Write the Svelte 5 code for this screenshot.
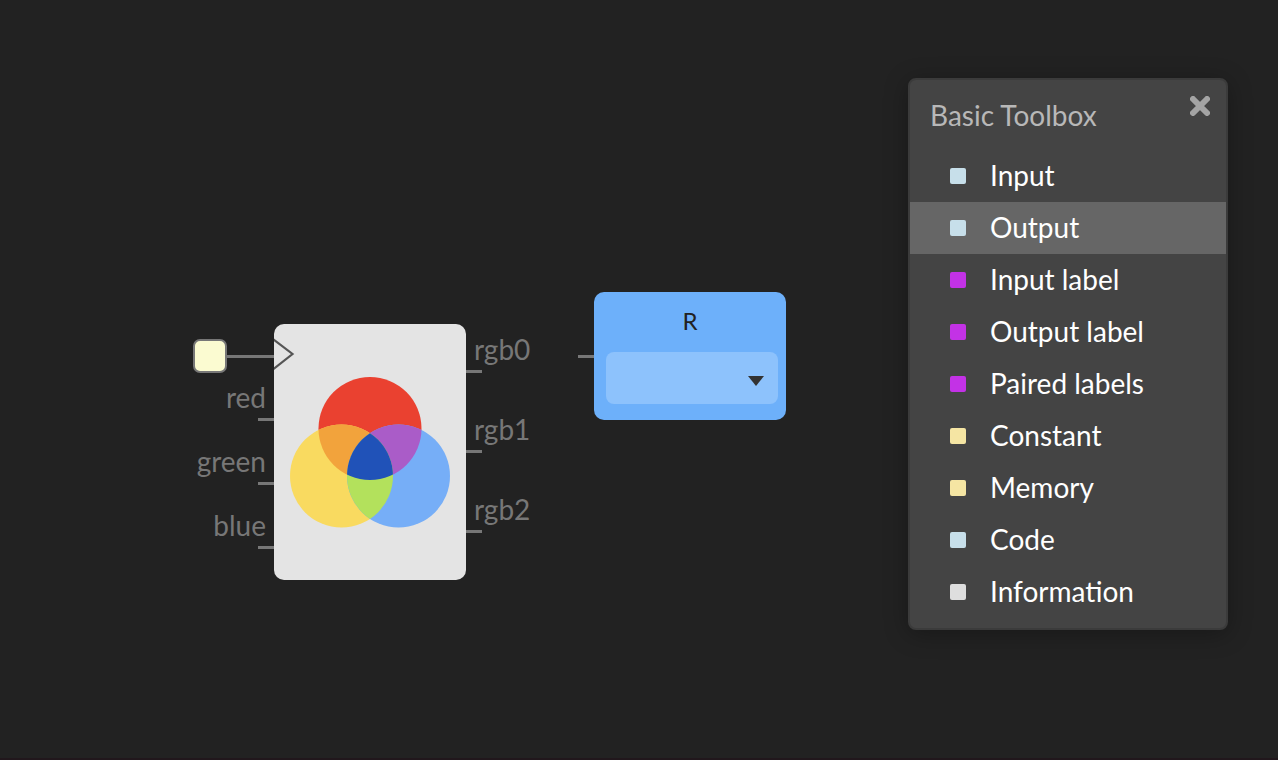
<script>
  const inputs = ['red', 'green', 'blue'];
  const outputs = ['rgb0', 'rgb1', 'rgb2'];
  const items = [
    { name: 'Input', color: '#c7dfea' },
    { name: 'Output', color: '#c7dfea' },
    { name: 'Input label', color: '#c332e6' },
    { name: 'Output label', color: '#c332e6' },
    { name: 'Paired labels', color: '#c332e6' },
    { name: 'Constant', color: '#f5e5a3' },
    { name: 'Memory', color: '#f5e5a3' },
    { name: 'Code', color: '#c7dfea' },
    { name: 'Information', color: '#dedede' }
  ];
  let active = $state('Output');
  let open = $state(true);
  let pin = $state('');
</script>

<main class="canvas">
  <section class="node mixer">
    <div class="ports left">
      <div class="clock"><span class="square"></span><span class="wire"></span></div>
      {#each inputs as name}
        <div class="port">{name}</div>
      {/each}
    </div>
    <div class="body">
      <svg class="edge" width="22" height="34" viewBox="0 0 22 34">
        <path d="M-1 1 L18.500 16 L-1 31.500" fill="none" stroke="#555" stroke-width="2.200" />
      </svg>
      <svg class="venn" width="160" height="152" viewBox="0 0 160 152">
        <defs>
          <clipPath id="red-area"><circle cx="80" cy="52.500" r="51.500" /></clipPath>
          <clipPath id="yellow-area"><circle cx="51.500" cy="100" r="51.500" /></clipPath>
        </defs>
        <circle cx="80" cy="52.500" r="51.500" fill="#ea4130" />
        <circle cx="51.500" cy="100" r="51.500" fill="#f9da60" />
        <circle cx="108.500" cy="100" r="51.500" fill="#76aef7" />
        <circle cx="51.500" cy="100" r="51.500" fill="#f2a33c" clip-path="url(#red-area)" />
        <circle cx="108.500" cy="100" r="51.500" fill="#aa5cc8" clip-path="url(#red-area)" />
        <circle cx="108.500" cy="100" r="51.500" fill="#b3e15c" clip-path="url(#yellow-area)" />
        <g clip-path="url(#yellow-area)">
          <circle cx="108.500" cy="100" r="51.500" fill="#2052b8" clip-path="url(#red-area)" />
        </g>
      </svg>
    </div>
    <div class="ports right">
      {#each outputs as name}
        <div class="port">{name}</div>
      {/each}
    </div>
  </section>

  <section class="node output">
    <span class="stub"></span>
    <div class="card">
      <label for="pin">R</label>
      <div class="picker">
        <select id="pin" bind:value={pin}>
          <option value=""></option>
        </select>
        <svg width="16" height="10" viewBox="0 0 16 10"><path d="M0 0H16L8 10Z" fill="#333" /></svg>
      </div>
    </div>
  </section>

  {#if open}
    <aside class="toolbox">
      <header>
        <h2>Basic Toolbox</h2>
        <button class="close" aria-label="Close" onclick={() => (open = false)}>
          <svg width="20" height="20" viewBox="0 0 20 20"><path d="M3 3L17 17M17 3L3 17" stroke="#a4a4a4" stroke-width="6" stroke-linecap="round" /></svg>
        </button>
      </header>
      <ul>
        {#each items as item}
          <li>
            <button class="item" class:active={active === item.name} onclick={() => (active = item.name)}>
              <span class="swatch" style:background={item.color}></span>
              <span class="name">{item.name}</span>
            </button>
          </li>
        {/each}
      </ul>
    </aside>
  {/if}
</main>

<style>
  :global(body) {
    margin: 0;
    background: #222;
  }
  .canvas {
    position: relative;
    box-sizing: border-box;
    min-height: 100vh;
    overflow: hidden;
    background: #222;
    border-bottom: 2px solid #21171c;
    font-family: Lato, sans-serif;
    font-size: 28px;
    line-height: 32px;
  }
  .node {
    position: absolute;
    display: flex;
  }
  .mixer {
    left: 193px;
    top: 324px;
  }
  .body {
    position: relative;
    display: flex;
    align-items: center;
    justify-content: center;
    width: 192px;
    height: 256px;
    border-radius: 10px;
    background: #e4e4e4;
  }
  .edge {
    position: absolute;
    left: 0;
    top: 14px;
  }
  .ports {
    display: flex;
    flex-direction: column;
    color: #777;
  }
  .left {
    gap: 32px;
    width: 81px;
    text-align: right;
  }
  .clock {
    display: flex;
    align-items: center;
    height: 64px;
    margin-bottom: -39px;
  }
  .square {
    box-sizing: border-box;
    width: 34px;
    height: 34px;
    border: 2px solid #777;
    border-radius: 7px;
    background: #fbfbd1;
  }
  .wire {
    flex: 1;
    height: 3px;
    background: #777;
  }
  .port {
    position: relative;
  }
  .port::after {
    content: '';
    position: absolute;
    bottom: -8px;
    width: 16px;
    height: 3px;
    background: #777;
  }
  .left .port {
    padding-right: 8px;
  }
  .left .port::after {
    right: 0;
  }
  .right {
    gap: 48px;
    padding-top: 9px;
  }
  .right .port {
    padding-left: 8px;
  }
  .right .port::after {
    left: 0;
  }
  .output {
    left: 578px;
    top: 292px;
    align-items: center;
  }
  .stub {
    width: 16px;
    height: 3px;
    background: #777;
  }
  .card {
    box-sizing: border-box;
    display: flex;
    flex-direction: column;
    width: 192px;
    height: 128px;
    padding: 12px 8px 16px 12px;
    border-radius: 10px;
    background: #6db0fa;
  }
  .card label {
    flex: 1;
    padding: 1px 4px 0 0;
    color: #222;
    font-size: 24px;
    text-align: center;
  }
  .picker {
    position: relative;
    display: flex;
  }
  .picker select {
    width: 100%;
    height: 52px;
    padding: 0 12px;
    border: 0;
    border-radius: 8px;
    appearance: none;
    background: #8dc2fc;
    font: inherit;
  }
  .picker svg {
    position: absolute;
    right: 14px;
    top: 24px;
    pointer-events: none;
  }
  .toolbox {
    position: absolute;
    top: 78px;
    right: 50px;
    box-sizing: border-box;
    width: 320px;
    padding-bottom: 10px;
    border: 2px solid #3b3b3b;
    border-radius: 8px;
    background: #444;
    box-shadow: 0 4px 24px rgba(0, 0, 0, 0.3);
  }
  header {
    display: flex;
    justify-content: space-between;
    align-items: flex-start;
    padding: 16px 16px 19px 20px;
  }
  h2 {
    margin: 3px 0 0;
    color: #b8b8b8;
    font-size: 28px;
    font-weight: 400;
  }
  .close {
    display: flex;
    padding: 0;
    border: 0;
    background: none;
    cursor: pointer;
  }
  ul {
    margin: 0;
    padding: 0;
    list-style: none;
  }
  .item {
    display: flex;
    align-items: center;
    gap: 24px;
    width: 100%;
    height: 52px;
    padding: 0 40px;
    border: 0;
    background: none;
    color: #fff;
    font: inherit;
    text-align: left;
    cursor: pointer;
  }
  .item.active {
    background: #666;
  }
  .name {
    padding-bottom: 2px;
  }
  .swatch {
    width: 16px;
    height: 16px;
    border-radius: 2px;
  }
</style>
